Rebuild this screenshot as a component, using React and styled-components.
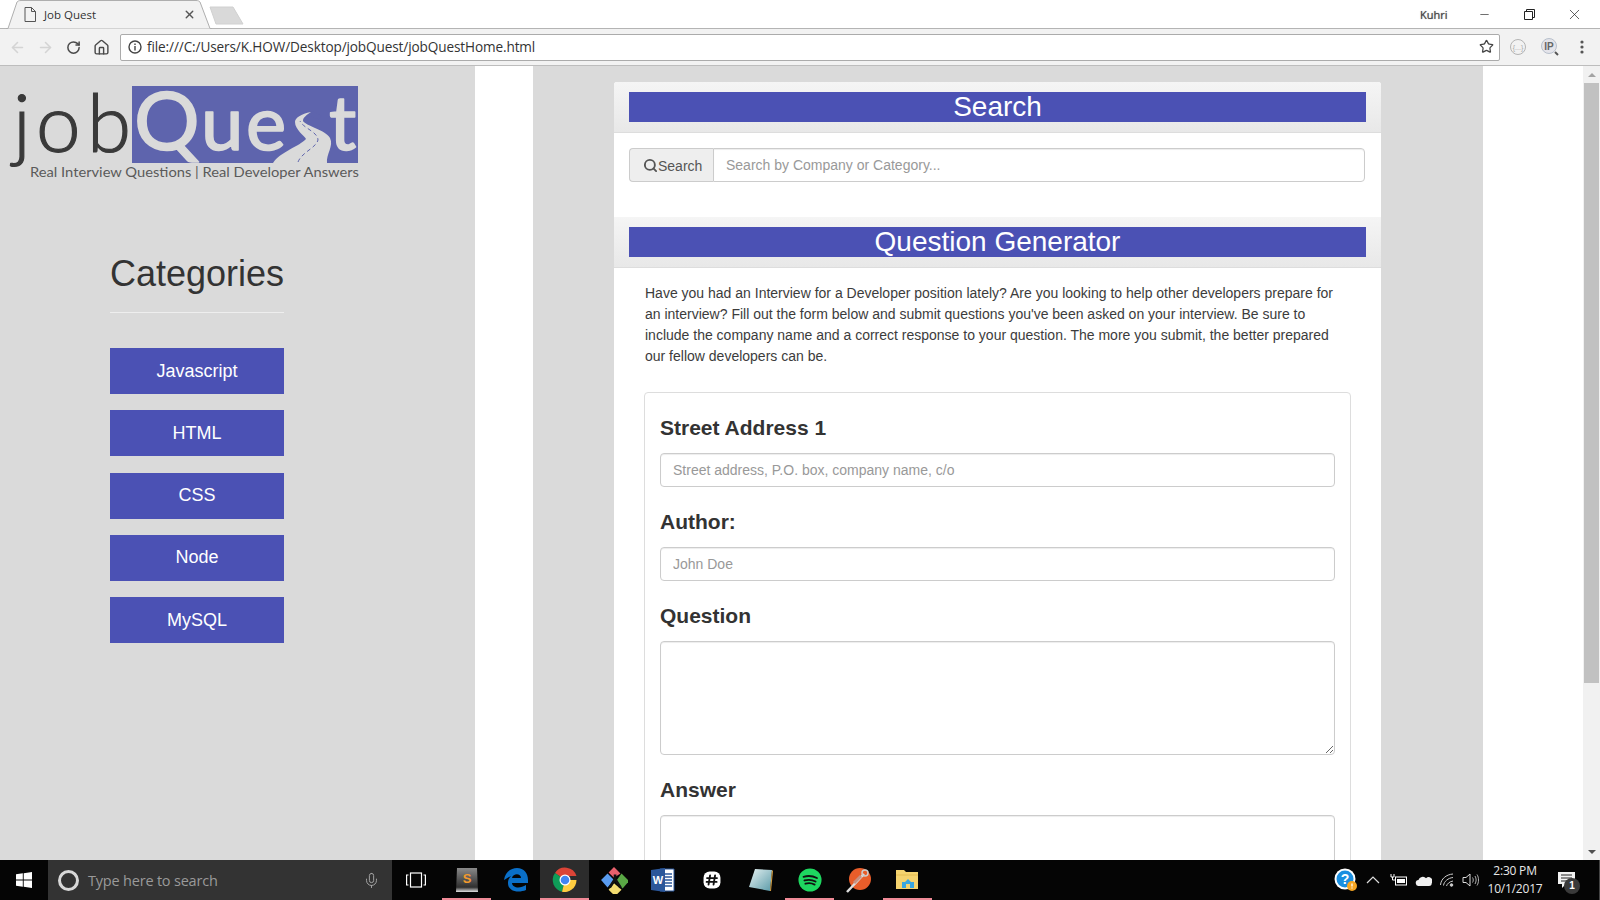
import React from "react";
import styled, { createGlobalStyle } from "styled-components";
import { ArrowLeft, ArrowRight, RotateCw, Home, Star, X, Minus, Search, Mic } from "lucide-react";

const Global = createGlobalStyle`
  html, body { margin: 0; padding: 0; height: 100%; overflow: hidden; background: #fff; }
  #root { height: 100%; }
  * { box-sizing: border-box; }
`;

const BLUE = "#4b51b4";
const UI = `"Open Sans", "Noto Sans", sans-serif`;
const SANS = `"Liberation Sans", Arial, sans-serif`;

const Page = styled.div`
  width: 1600px; height: 900px; display: flex; flex-direction: column; font-family: ${SANS}; overflow: hidden;
`;

/* ---------- browser chrome ---------- */
const TabStrip = styled.div`
  height: 29px; flex: none; display: flex; align-items: flex-start; background: #fff;
  border-bottom: 1px solid #b4b4b4; position: relative;
`;
const Tab = styled.div`
  position: relative; width: 206px; height: 29px; margin-left: 6px; display: flex; align-items: center;
  padding: 0 0 0 18px; color: #333; font: 11.5px ${UI}; flex: none;
`;
const TabShape = styled.svg`
  position: absolute; left: 0; top: 0; width: 206px; height: 29px;
`;
const TabIcon = styled.svg`
  position: relative; width: 12px; height: 15px; margin-right: 8px; flex: none;
`;
const TabTitle = styled.span`
  position: relative; width: 139px; white-space: nowrap;
`;
const TabClose = styled.span`
  position: relative; display: flex; color: #555;
`;
const NewTab = styled.svg`
  width: 36px; height: 20px; margin-top: 6px; margin-left: -3px; flex: none;
`;
const Profile = styled.span`
  margin-left: auto; margin-top: 7px; width: 28px; font: 11px ${UI}; color: #444;
  text-shadow: 0 0 1px #777; white-space: nowrap;
`;
const WinButton = styled.span`
  width: 45px; height: 28px; display: flex; align-items: center; justify-content: center; color: #222; flex: none;
`;
const WinControls = styled.div`
  display: flex; margin-left: 14px; margin-right: 3px;
`;
const Toolbar = styled.div`
  height: 37px; flex: none; background: #f2f2f2; border-bottom: 1px solid #bdbdbd;
  display: flex; align-items: center; padding-left: 3px;
`;
const NavBtn = styled.span`
  width: 28px; height: 28px; flex: none; display: flex; align-items: center; justify-content: center;
  color: ${p => (p.$off ? "#d4d4d4" : "#4a4a4a")};
`;
const Omnibox = styled.div`
  width: 1380px; height: 27px; margin: 0 2px 0 5px; background: #fff; border: 1px solid #ababab; border-radius: 2px;
  display: flex; align-items: center; padding: 0 5px 1px 7px; font: 13.6px ${UI}; color: #333; flex: none;
`;
const InfoGlyph = styled.svg`
  width: 14px; height: 14px; margin-right: 5px; flex: none;
`;
const Url = styled.span`
  flex: 1; white-space: nowrap; letter-spacing: -0.12px;
`;
const ExtSlot = styled.span`
  width: 32px; height: 28px; flex: none; display: flex; align-items: center; justify-content: center;
`;

/* ---------- page ---------- */
const Viewport = styled.div`
  flex: 1; min-height: 0; display: flex; background: #fff; overflow: hidden;
`;
const Sidebar = styled.aside`
  width: 475px; flex: none; background: #dadada; padding-top: 20px;
`;
const Logo = styled.svg`
  display: block; width: 370px; height: 100px;
`;
const CategoryCol = styled.nav`
  width: 174px; margin: 68px 0 0 110px; display: flex; flex-direction: column;
`;
const CategoryTitle = styled.h2`
  margin: 0; font: 400 36px/40px ${SANS}; color: #333; text-align: center; white-space: nowrap;
`;
const Rule = styled.hr`
  width: 100%; margin: 18px 0 35px; border: 0; border-top: 1px solid #eee;
`;
const CategoryBtn = styled.button`
  height: 46px; margin-bottom: 16.25px; border: 0; background: ${BLUE}; color: #fff; font: 18px ${SANS}; padding: 0;
`;
const Gutter = styled.div`
  width: 58px; flex: none;
`;
const Main = styled.main`
  width: 950px; flex: none; background: #dadada; padding: 16px 0 0 81px; overflow: hidden;
`;
const Panel = styled.section`
  width: 767px; background: #fff; border-radius: 3px 3px 0 0; overflow: hidden;
`;
const PanelHead = styled.header`
  padding: 10px 15px; background: linear-gradient(to bottom, #f5f5f5, #e8e8e8);
  border-bottom: 1px solid #ddd;
`;
const BlueTitle = styled.h3`
  margin: 0; height: 30px; background: ${BLUE}; color: #fff; text-align: center; font: 400 28px/30px ${SANS};
`;
const SearchBody = styled.div`
  padding: 15px 15px 35px;
`;
const InputGroup = styled.div`
  display: flex; height: 34px; width: 736px;
`;
const Addon = styled.span`
  width: 84px; flex: none; display: flex; align-items: center; padding-left: 13px; padding-top: 1px;
  background: #eee; border: 1px solid #ccc; border-right: 0; border-radius: 4px 0 0 4px; color: #555; font-size: 14px;
`;
const Field = styled.input`
  display: block; width: 100%; height: 34px; padding: 6px 12px; border: 1px solid #ccc; border-radius: ${p => p.$joined ? "0 4px 4px 0" : "4px"};
  font: 14px ${SANS}; color: #555; background: #fff; box-shadow: inset 0 1px 1px rgba(0,0,0,.075);
  &::placeholder { color: #999; opacity: 1; }
`;
const FormBody = styled.div`
  padding: 15px 31px 0;
`;
const Intro = styled.p`
  margin: 0 0 25px; font-size: 14px; line-height: 21px; color: #3c3c3c;
`;
const Card = styled.div`
  width: 707px; margin-left: -1px; border: 1px solid #ddd; border-radius: 4px 4px 0 0; padding: 19px 15px 0; height: 600px;
`;
const Group = styled.div`
  margin-bottom: 19px;
`;
const Label = styled.label`
  display: block; margin-bottom: 9px; font: 700 21px/32px ${SANS}; color: #333;
`;
const Area = styled.textarea`
  display: block; width: 100%; height: 114px; border: 1px solid #ccc; border-radius: 4px; padding: 6px 12px;
  background: #fff; box-shadow: inset 0 1px 1px rgba(0,0,0,.075); resize: vertical;
`;
const WhiteSide = styled.div`
  flex: 1;
`;
const Scrollbar = styled.div`
  width: 17px; flex: none; background: #f1f1f1; display: flex; flex-direction: column; align-items: center; position: relative;
`;
const ScrollArrow = styled.div`
  height: 17px; flex: none; display: flex; align-items: center; justify-content: center;
  width: 100%;
  &::before { content: ""; border-left: 4px solid transparent; border-right: 4px solid transparent;
    ${p => p.$down ? "border-top: 4px solid #505050;" : "border-bottom: 4px solid #a3a3a3;"} }
`;
const Thumb = styled.div`
  width: 100%; height: 600px; background: #c1c1c1; margin-bottom: auto; border-left: 1px solid #f1f1f1; border-right: 1px solid #f1f1f1;
`;

/* ---------- taskbar ---------- */
const Taskbar = styled.footer`
  height: 40px; flex: none; background: #050505; display: flex; align-items: stretch; color: #fff;
`;
const StartBtn = styled.div`
  width: 48px; flex: none; display: flex; align-items: center; justify-content: center;
`;
const SearchBox = styled.div`
  width: 344px; flex: none; background: #333; display: flex; align-items: center; padding-left: 10px;
  font: 14.5px ${UI}; color: #9a9a9a;
`;
const CortanaRing = styled.span`
  width: 21px; height: 21px; border-radius: 50%; border: 3px solid #d8d8d8; margin-right: 9px; flex: none;
`;
const SearchHint = styled.span`
  flex: 1; white-space: nowrap; letter-spacing: -0.2px;
`;
const MicSlot = styled.span`
  display: flex; margin-right: 12px; color: #aaa;
`;
const TaskView = styled.div`
  width: 50px; flex: none; display: flex; align-items: center; justify-content: center; padding-right: 3px;
`;
const Slot = styled.div`
  width: 49px; flex: none; display: flex; align-items: center; justify-content: center; position: relative;
  background: ${p => (p.$active ? "#2c2c2c" : "transparent")};
  border-bottom: 2px solid ${p => (p.$open || p.$active ? "#f08a97" : "transparent")};
  padding-top: 2px;
  & > svg { display: block; }
`;
const Tray = styled.div`
  margin-left: auto; display: flex; align-items: center; padding-right: 14px; border-right: 1px solid #444;
`;
const TraySlot = styled.span`
  width: ${p => p.$w || 24}px; flex: none; display: flex; align-items: center; justify-content: center; position: relative;
`;
const Clock = styled.div`
  width: 66px; margin-left: 1px; text-align: center; font: 12px/18px ${UI}; color: #e8e8e8; white-space: nowrap; letter-spacing: -0.2px;
`;
const NotifySlot = styled.div`
  width: 37px; height: 100%; display: flex; align-items: center; justify-content: center; position: relative;
`;
const NotifyBadge = styled.span`
  position: absolute; right: 5px; bottom: 6px; width: 16px; height: 16px; border-radius: 50%; background: #3a3a3a;
  font: 700 10px/16px ${SANS}; text-align: center; color: #fff;
`;

/* ---------- drawings ---------- */
const LOGO_BLUE = "#5e64ad";
const LogoArt = () => (
  <Logo viewBox="0 0 370 100">
    <rect x="132" y="0" width="226" height="77" fill={LOGO_BLUE} />
    <text x="13 36 87" y="66" fontFamily="Lato, sans-serif" fontWeight="300" fontSize="80" fill="#3a3a3a" stroke="#3a3a3a" strokeWidth="1.2">job</text>
    <text x="134 201 246 292 329" y="64" fontFamily="Lato, sans-serif" fontWeight="400" fontSize="76" fill="#dadada" stroke="#dadada" strokeWidth="1.6" strokeLinejoin="round">
      <tspan fontSize="82">Q</tspan>ue<tspan fill={LOGO_BLUE} stroke="none">s</tspan>t
    </text>
    <path d="M311 26C301 28 295 32 295 36C295 44 305 50 306 53C300 60 280 66 273 77H327C326 68 334 60 330 52C326 44 306 40 303 35C303 31 307 29 311 26Z" fill="#dadada" />
    <path d="M298 76C302 66 316 62 318 54C318 46 303 42 300 35" fill="none" stroke={LOGO_BLUE} strokeWidth="1" strokeDasharray="4 3" />
    <text x="30" y="91" fontFamily="Lato, sans-serif" fontSize="14" fill="#5a5a5a" textLength="329" lengthAdjust="spacingAndGlyphs">Real Interview Questions | Real Developer Answers</text>
  </Logo>
);

const IconFrame = ({ size = 26, children }) => <svg width={size} height={size} viewBox="0 0 26 26">{children}</svg>;

const WinLogo = () => (
  <svg width="16" height="16" viewBox="0 0 16 16"><path d="M0 2.3 6.8 1.3V7.5H0ZM7.7 1.2 16 0V7.5H7.7ZM0 8.4H6.8V14.7L0 13.7ZM7.7 8.4H16V16L7.7 14.8Z" fill="#fff" /></svg>
);
const TaskViewIcon = () => (
  <svg width="20" height="16" viewBox="0 0 20 16" fill="none" stroke="#fff" strokeWidth="1.2">
    <rect x="4.5" y="1" width="11" height="14" /><path d="M2.5 3H.6V13H2.5M17.5 3H19.4V13H17.5" />
  </svg>
);
const Sublime = () => (
  <IconFrame>
    <defs><linearGradient id="sb" x1="0" y1="0" x2="0" y2="1"><stop offset="0" stopColor="#8a8a8a" /><stop offset=".8" stopColor="#2f2f2f" /><stop offset="1" stopColor="#e2e2e2" /></linearGradient></defs>
    <path d="M3 1H23L24 25H2Z" fill="url(#sb)" />
    <text x="13" y="16" textAnchor="middle" fontFamily="Liberation Sans, sans-serif" fontWeight="700" fontSize="13" fill="#f39a2c">S</text>
  </IconFrame>
);
const Edge = () => (
  <IconFrame>
    <path d="M1 13C2 5 8 1 14 1c7 0 11 5 11 12v3H9c.5 5 8 6 14 2v5c-7 3-18 2-18-7 0-3 1-5 3-7-2 1-5 3-7 4ZM9 11h9c0-5-8-5-9 0Z" fill="#0a6fc8" />
  </IconFrame>
);
const Chrome = () => (
  <IconFrame>
    <path d="M13 13 3 6A12 12 0 0 1 24.500 9H13Z" fill="#db4437" />
    <path d="M13 13 3 6A12 12 0 0 0 10 24.700Z" fill="#0f9d58" />
    <path d="M13 13H24.500A12 12 0 0 1 10 24.700Z" fill="#ffcd40" />
    <circle cx="13" cy="13" r="5.500" fill="#fff" /><circle cx="13" cy="13" r="4.300" fill="#4285f4" />
  </IconFrame>
);
const Kraken = () => (
  <IconFrame size={28}>
    <path d="M13 1 19 7 13 11 8 6Z" fill="#e8606c" />
    <path d="M20 7 27 14 21 21 15 14Z" fill="#5aa845" />
    <path d="M7 7 13 13 7 20 1 13Z" fill="#5a9cf0" />
    <path d="M13 16 20 22 14 28 8 22Z" fill="#f3dc70" />
    <path d="M9 20 14 12 19 20M14 12V8" stroke="#111" strokeWidth="2.500" fill="none" />
  </IconFrame>
);
const Word = () => (
  <IconFrame>
    <path d="M10 2H24V24H10Z" fill="#fff" stroke="#2b579a" />
    <path d="M14 7H22M14 10H22M14 13H22M14 16H22M14 19H22" stroke="#2b579a" strokeWidth="1.500" />
    <path d="M1 3 15 1V25L1 23Z" fill="#2b579a" />
    <text x="8" y="17" textAnchor="middle" fontFamily="Liberation Sans, sans-serif" fontWeight="700" fontSize="11" fill="#fff">W</text>
  </IconFrame>
);
const Slack = () => (
  <IconFrame size={20}>
    <rect x="2" y="2" width="22" height="22" rx="8" fill="#fff" />
    <path d="M10.500 7 8.500 19M17 7 15 19M6.500 10.500H19.500M6 15.500H19" stroke="#111" strokeWidth="2.400" strokeLinecap="round" />
  </IconFrame>
);
const Notes = () => (
  <IconFrame>
    <defs><linearGradient id="nt" x1="0" y1="0" x2="1" y2="1"><stop offset="0" stopColor="#e8f3f3" /><stop offset="1" stopColor="#5a9aa8" /></linearGradient></defs>
    <path d="M7 2 24 3 22 24 1 20Z" fill="url(#nt)" />
    <path d="M24 3 25 4 23 24 22 24Z" fill="#d8a040" />
  </IconFrame>
);
const Spotify = () => (
  <IconFrame size={24}>
    <circle cx="13" cy="13" r="12.500" fill="#1ed760" />
    <path d="M6 9.500c5-1.500 10-1 14.500 1.300M7 13.500c4.500-1.200 8.500-.8 12 1.200M8 17c3.500-1 7-.7 10 1" stroke="#111" strokeWidth="2" strokeLinecap="round" fill="none" />
  </IconFrame>
);
const Feather = () => (
  <IconFrame>
    <circle cx="14" cy="12" r="11" fill="#e85d2a" />
    <path d="M1 25 18 7" stroke="#ddd" strokeWidth="2.500" />
    <circle cx="19" cy="6" r="3" fill="none" stroke="#ccc" strokeWidth="1.500" />
    <path d="M8 16 15 9" stroke="#c89080" strokeWidth="3" />
  </IconFrame>
);
const Folder = () => (
  <IconFrame>
    <path d="M1 3H9L11 5H23V22H1Z" fill="#f5d36e" />
    <path d="M1 8H23" stroke="#e5bd50" />
    <path d="M7 21V15H10L13 12 16 15H19V21H15V17H11V21Z" fill="#3aa6e0" />
  </IconFrame>
);
const Help = () => (
  <svg width="24" height="24" viewBox="0 0 24 24">
    <circle cx="11" cy="11" r="10.500" fill="#fff" /><circle cx="11" cy="11" r="8.500" fill="#1a8fe0" />
    <text x="11" y="16" textAnchor="middle" fontFamily="Liberation Sans, sans-serif" fontWeight="700" fontSize="14" fill="#fff">?</text>
    <circle cx="18" cy="18" r="5" fill="#f6a623" /><path d="M18 15.500v3M18 19.600v1" stroke="#fff" strokeWidth="1.300" />
  </svg>
);
const Chevron = () => <svg width="14" height="8" viewBox="0 0 14 8" fill="none" stroke="#ddd" strokeWidth="1.200"><path d="M1 7 7 1l6 6" /></svg>;
const Power = () => (
  <svg width="18" height="14" viewBox="0 0 18 14" fill="none" stroke="#fff"><rect x="5.500" y="4" width="11" height="8" fill="none" /><path d="M7 6H15V10H7Z" fill="#fff" stroke="none" /><path d="M1 1v3h3V1M2.500 4v3h3" /></svg>
);
const Cloud = () => <svg width="17" height="11" viewBox="0 0 17 11"><path d="M4 11a3 3 0 0 1-.5-6A4.500 4.500 0 0 1 11 3.200 3.800 3.800 0 0 1 16.800 8 3 3 0 0 1 14 11Z" fill="#f0f0f0" /></svg>;
const WifiIcon = () => (
  <svg width="14" height="14" viewBox="0 0 14 14" fill="none" stroke="#ccc" strokeWidth="1"><path d="M.5 12C1 6 6 1.500 13 1M3.500 12.500C4 8.500 8 5 13 4.500M6.500 13C7 11 9.500 8.500 13 8" /><circle cx="11.500" cy="12" r="1.300" fill="#ccc" /></svg>
);
const Speaker = () => (
  <svg width="17" height="14" viewBox="0 0 17 14" fill="none" stroke="#ddd"><path d="M1 4.500H4L8 1V13L4 9.500H1Z" /><path d="M10.500 4.500c1 1.500 1 3.500 0 5M13 3c1.500 2.500 1.500 5.500 0 8M15 1.500c2 3 2 8 0 11" strokeWidth=".8" /></svg>
);
const Bubble = () => <svg width="17" height="16" viewBox="0 0 17 16"><path d="M0 0H17V12H8L4 16V12H0Z" fill="#f2f2f2" /><path d="M3 3H14M3 6H14M3 9H10" stroke="#222" /></svg>;

const categories = ["Javascript", "HTML", "CSS", "Node", "MySQL"];

export default function App() {
  return (
    <Page>
      <Global />
      <TabStrip>
        <Tab>
          <TabShape viewBox="0 0 206 29">
            <path d="M0 28.500H2L11 2C12 1 13 .5 15 .5H190C192 .5 193 1 194 2L204 28.500H206" fill="#f2f2f2" stroke="#aeaeae" />
          </TabShape>
          <TabIcon viewBox="0 0 12 15" fill="none" stroke="#555"><path d="M1 .5H7.500L11.500 4.500V14.500H1ZM7.500 .5V4.500H11.500" /></TabIcon>
          <TabTitle>Job Quest</TabTitle>
          <TabClose><X size={13} strokeWidth={2.500} /></TabClose>
        </Tab>
        <NewTab viewBox="0 0 36 20"><path d="M1 1H24L34 18H7Z" fill="#d9d9d9" stroke="#d0d0d0" /></NewTab>
        <Profile>Kuhri</Profile>
        <WinControls>
          <WinButton><Minus size={13} strokeWidth={1.200} /></WinButton>
          <WinButton>
            <svg width="11" height="11" viewBox="0 0 11 11" fill="none" stroke="#222"><path d="M.5 2.500H8.500V10.500H.5ZM2.500 2.500V.5H10.500V8.500H8.500" /></svg>
          </WinButton>
          <WinButton><X size={17} strokeWidth={1} /></WinButton>
        </WinControls>
      </TabStrip>

      <Toolbar>
        <NavBtn $off><ArrowLeft size={17} strokeWidth={2.200} /></NavBtn>
        <NavBtn $off><ArrowRight size={17} strokeWidth={2.200} /></NavBtn>
        <NavBtn><RotateCw size={15} strokeWidth={2.400} /></NavBtn>
        <NavBtn><Home size={17} strokeWidth={2} /></NavBtn>
        <Omnibox>
          <InfoGlyph viewBox="0 0 14 14" fill="none" stroke="#444" strokeWidth="1.400">
            <circle cx="7" cy="7" r="6" /><path d="M7 6V10.500M7 3.500V5" />
          </InfoGlyph>
          <Url>file:///C:/Users/K.HOW/Desktop/jobQuest/jobQuestHome.html</Url>
          <Star size={15} strokeWidth={2} color="#444" />
        </Omnibox>
        <ExtSlot>
          <svg width="18" height="18" viewBox="0 0 18 18" fill="none" stroke="#b4b4b4"><circle cx="9" cy="9" r="7.500" /><text x="9" y="11.500" textAnchor="middle" fontSize="7" stroke="none" fill="#aaa" fontFamily="Liberation Sans, sans-serif">{"{...}"}</text></svg>
        </ExtSlot>
        <ExtSlot>
          <svg width="20" height="20" viewBox="0 0 20 20" fill="none"><circle cx="9" cy="9" r="7.500" fill="#e4e4ea" stroke="#b8c0cc" /><text x="9" y="12.500" textAnchor="middle" fontSize="10" fontWeight="700" fill="#666" fontFamily="Liberation Sans, sans-serif">IP</text><path d="M15 15 18 18" stroke="#555" strokeWidth="2" /></svg>
        </ExtSlot>
        <ExtSlot>
          <svg width="4" height="14" viewBox="0 0 4 14" fill="#555"><circle cx="2" cy="2" r="1.600" /><circle cx="2" cy="7" r="1.600" /><circle cx="2" cy="12" r="1.600" /></svg>
        </ExtSlot>
      </Toolbar>

      <Viewport>
        <Sidebar>
          <LogoArt />
          <CategoryCol>
            <CategoryTitle>Categories</CategoryTitle>
            <Rule />
            {categories.map(c => <CategoryBtn key={c}>{c}</CategoryBtn>)}
          </CategoryCol>
        </Sidebar>
        <Gutter />
        <Main>
          <Panel>
            <PanelHead><BlueTitle>Search</BlueTitle></PanelHead>
            <SearchBody>
              <InputGroup>
                <Addon><Search size={15} strokeWidth={3} />Search</Addon>
                <Field $joined placeholder="Search by Company or Category..." />
              </InputGroup>
            </SearchBody>
            <PanelHead><BlueTitle>Question Generator</BlueTitle></PanelHead>
            <FormBody>
              <Intro>
                Have you had an Interview for a Developer position lately? Are you looking to help other developers prepare for an interview? Fill out the form below and submit questions you've been asked on your interview. Be sure to include the company name and a correct response to your question. The more you submit, the better prepared our fellow developers can be.
              </Intro>
              <Card>
                <Group>
                  <Label>Street Address 1</Label>
                  <Field placeholder="Street address, P.O. box, company name, c/o" />
                </Group>
                <Group>
                  <Label>Author:</Label>
                  <Field placeholder="John Doe" />
                </Group>
                <Group>
                  <Label>Question</Label>
                  <Area />
                </Group>
                <Group>
                  <Label>Answer</Label>
                  <Area />
                </Group>
              </Card>
            </FormBody>
          </Panel>
        </Main>
        <WhiteSide />
        <Scrollbar>
          <ScrollArrow />
          <Thumb />
          <ScrollArrow $down />
        </Scrollbar>
      </Viewport>

      <Taskbar>
        <StartBtn><WinLogo /></StartBtn>
        <SearchBox>
          <CortanaRing />
          <SearchHint>Type here to search</SearchHint>
          <MicSlot><Mic size={17} strokeWidth={1.300} /></MicSlot>
        </SearchBox>
        <TaskView><TaskViewIcon /></TaskView>
        <Slot $open><Sublime /></Slot>
        <Slot><Edge /></Slot>
        <Slot $active><Chrome /></Slot>
        <Slot><Kraken /></Slot>
        <Slot><Word /></Slot>
        <Slot><Slack /></Slot>
        <Slot><Notes /></Slot>
        <Slot $open><Spotify /></Slot>
        <Slot><Feather /></Slot>
        <Slot $open><Folder /></Slot>
        <Tray>
          <TraySlot $w={26}><Help /></TraySlot>
          <TraySlot $w={28}><Chevron /></TraySlot>
          <TraySlot $w={24}><Power /></TraySlot>
          <TraySlot $w={24}><Cloud /></TraySlot>
          <TraySlot $w={24}><WifiIcon /></TraySlot>
          <TraySlot $w={22}><Speaker /></TraySlot>
          <Clock>2:30 PM<br />10/1/2017</Clock>
          <NotifySlot><Bubble /><NotifyBadge>1</NotifyBadge></NotifySlot>
        </Tray>
      </Taskbar>
    </Page>
  );
}
